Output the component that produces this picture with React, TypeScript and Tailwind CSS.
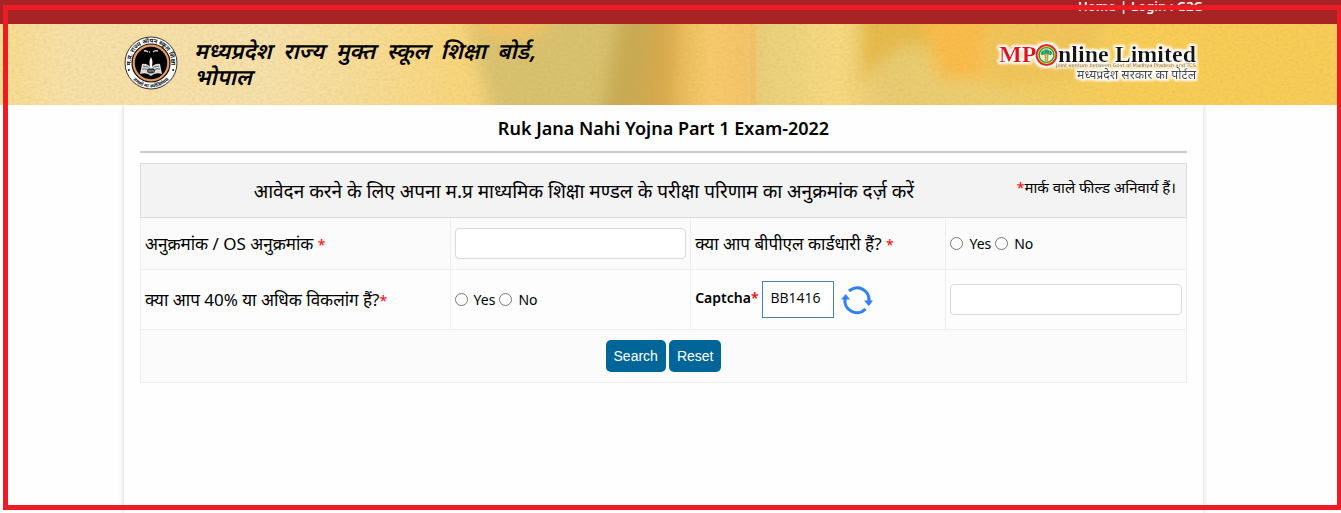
import React from 'react';

const BoardSeal: React.FC = () => (
  <svg viewBox="0 0 54 54" className="size-[54px] shrink-0" role="img" aria-label="Board seal">
    <defs>
      <path id="seal-top" d="M8.5 35 A20.2 20.2 0 1 1 45.5 35" />
      <path id="seal-bottom" d="M4.5 37 A24.6 24.6 0 0 0 49.5 37" />
    </defs>
    <circle cx="27" cy="27" r="26" fill="#fff" stroke="#333" strokeWidth="1" />
    <circle cx="27" cy="27" r="19" fill="#e39a5c" stroke="#111" strokeWidth="1.2" />
    <circle cx="27" cy="27" r="16.2" fill="#000" />
    <text fontSize="6" fontWeight="700" fill="#111" className="font-['Noto_Sans_Devanagari','Noto_Sans',sans-serif]">
      <textPath href="#seal-top" startOffset="50%" textAnchor="middle">
        म.प्र. राज्य ओपन स्कूल शिक्षा
      </textPath>
    </text>
    <text fontSize="5" fontWeight="700" fill="#111" className="font-['Noto_Sans_Devanagari','Noto_Sans',sans-serif]">
      <textPath href="#seal-bottom" startOffset="50%" textAnchor="middle">
        तमसो मा ज्योतिर्गमय
      </textPath>
    </text>
    <circle cx="4.8" cy="34" r="1" fill="#111" />
    <circle cx="49.2" cy="34" r="1" fill="#111" />
    <path d="M20 15 q2 -1 4 1 M25 16 h1 M29 16 q2 -2 5 -1" stroke="#ddd" strokeWidth="1.4" fill="none" />
    <path d="M27 21 c-2 4 -1.5 5 -1 11 h2 c.5 -6 1 -7 -1 -11z" fill="#fff" />
    <path d="M18 28 q5 -1 9 4 q4 -5 9 -4 l2 10 q-7 -2 -11 2 q-4 -4 -11 -2z" fill="#ddd" />
    <path d="M19 30 q5 0 8 4 q3 -4 8 -4 M18 33 q6 -1 9 4 q3 -5 9 -4" stroke="#444" strokeWidth=".8" fill="none" />
    <ellipse cx="27" cy="35" rx="4" ry="2.4" fill="#333" />
    <path d="M24 35 h6" stroke="#bbb" strokeWidth=".8" />
  </svg>
);

const PortalLogo: React.FC = () => (
  <svg viewBox="0 0 204 46" className="h-[46px] w-[204px] shrink-0" role="img" aria-label="MPOnline Limited">
    <defs>
      <filter id="logo-glow" x="-5%" y="-15%" width="110%" height="130%">
        <feMorphology in="SourceAlpha" operator="dilate" radius="2" />
        <feGaussianBlur stdDeviation="1" result="halo" />
        <feFlood floodColor="#fff" />
        <feComposite in2="halo" operator="in" />
        <feMerge>
          <feMergeNode />
          <feMergeNode in="SourceGraphic" />
        </feMerge>
      </filter>
    </defs>
    <g filter="url(#logo-glow)">
      <text x="4" y="22" fontSize="24" fontWeight="700" fill="#e8101c" className="font-['Liberation_Serif',serif]">
        MP
      </text>
      <circle cx="51.5" cy="15" r="10" fill="#f4e23a" stroke="#e3202a" strokeWidth="2" />
      <circle cx="51.5" cy="15" r="7.4" fill="#eaf6cf" stroke="#2c9a49" strokeWidth="1.4" />
      <path
        d="M46 14.5 a3 3 0 0 1 3 -4 a3 3 0 0 1 5 0 a3 3 0 0 1 3 4 a3 2 0 0 1 -4 0 h-3 a3 2 0 0 1 -4 0z"
        fill="#2aa572"
      />
      <path d="M50.5 21.5 v-6 l-2 -2 M52.5 21.5 v-6 l2 -2" stroke="#c79a4c" strokeWidth="1.5" fill="none" />
      <text x="63" y="22" fontSize="24" fontWeight="700" fill="#151515" className="font-['Liberation_Serif',serif]">
        nline Limited
      </text>
      <text x="201" y="27" textAnchor="end" fontSize="5" fill="#000" className="font-['DejaVu_Sans',sans-serif]">
        Joint venture between Govt of Madhya Pradesh and TCS
      </text>
      <text
        x="201"
        y="39"
        textAnchor="end"
        fontSize="12"
        fontWeight="500"
        fill="#444"
        className="font-['Noto_Sans_Devanagari','Noto_Sans',sans-serif]"
      >
        मध्यप्रदेश सरकार का पोर्टल
      </text>
    </g>
  </svg>
);

const BannerArt: React.FC = () => (
  <svg
    viewBox="0 0 1341 81"
    preserveAspectRatio="none"
    className="absolute inset-0 h-full w-full"
    aria-hidden="true"
  >
    <defs>
      <linearGradient id="banner-base">
        <stop offset="0" stopColor="#f8db92" />
        <stop offset=".05" stopColor="#f7e0a9" />
        <stop offset=".2" stopColor="#f6e0ac" />
        <stop offset=".27" stopColor="#f7dc98" />
        <stop offset=".34" stopColor="#f8d67e" />
        <stop offset=".42" stopColor="#e8c872" />
        <stop offset=".5" stopColor="#e5b556" />
        <stop offset=".53" stopColor="#f7cb6d" />
        <stop offset=".555" stopColor="#f5c469" />
        <stop offset=".57" stopColor="#e9d07d" />
        <stop offset=".625" stopColor="#f7d982" />
        <stop offset=".66" stopColor="#e8cb73" />
        <stop offset=".74" stopColor="#edcf71" />
        <stop offset=".84" stopColor="#f8cd58" />
        <stop offset="1" stopColor="#f8cc57" />
      </linearGradient>
      <filter id="soft" x="-30%" y="-30%" width="160%" height="160%">
        <feGaussianBlur stdDeviation="8" />
      </filter>
      <filter id="paper" x="0" y="0" width="100%" height="100%">
        <feTurbulence type="fractalNoise" baseFrequency=".25 .4" numOctaves="2" seed="4" />
        <feColorMatrix values="0 0 0 0 .5  0 0 0 0 .35  0 0 0 0 .05  .8 0 0 0 -.3" />
      </filter>
    </defs>
    <rect width="1341" height="81" fill="url(#banner-base)" />
    <g filter="url(#soft)">
      <path d="M465 -15 L655 -15 L672 95 L495 95 Z" fill="#d8c170" />
      <path d="M620 -15 L672 -15 L655 50 L640 95 L600 95 Z" fill="#c9ab54" />
      <path d="M652 -15 L672 -15 L668 95 L640 95 Z" fill="#d6a84e" />
      <ellipse cx="510" cy="0" rx="38" ry="14" fill="#f6c266" />
      <path d="M862 -15 H1000 L965 50 Q920 0 882 35 L862 60 Z" fill="#e6ba4c" />
      <path d="M920 -15 H985 L985 55 H940 Z" fill="#fabc4c" />
      <path d="M985 -15 H1110 L1080 55 L990 65 Z" fill="#f1c45a" />
    </g>
    <rect x="750" width="6" height="81" fill="#f3ba5c" opacity=".4" />
    <rect width="1341" height="81" filter="url(#paper)" opacity=".4" />
  </svg>
);

const RefreshIcon: React.FC = () => (
  <svg viewBox="0 0 32 30" className="h-[30px] w-8" fill="none" stroke="#2f80fa" strokeWidth="3.2" aria-hidden="true">
    <path d="M8 6 A12 12 0 0 1 28 16" />
    <path d="M24.5 24 A12 12 0 0 1 4 14" />
    <path d="M23 15.5 h9 l-4.2 5.5z M0 14.5 h9 l-4.2 -5.5z" fill="#2f80fa" stroke="none" />
  </svg>
);

const Required: React.FC = () => <span className="text-sm text-[#ff0000]">*</span>;

const YesNo: React.FC<{ name: string }> = ({ name }) => (
  <div className="flex items-center gap-1">
    {['Yes', 'No'].map((option) => (
      <label key={option} className="flex items-center gap-[6px]">
        <input type="radio" name={name} value={option} className="size-[13px]" />
        {option}
      </label>
    ))}
  </div>
);

const cell = 'border border-[#eeeeee] px-1 align-middle';
const question = 'text-[17px] leading-6 whitespace-nowrap';
const field = 'block h-[31px] w-full rounded border border-[#d9d9d9] bg-white px-2 outline-none focus:border-[#006699]';
const action = "h-8 rounded-[5px] bg-[#006699] px-2 font-['Liberation_Sans',sans-serif] text-sm text-white hover:bg-[#00557f]";

export default function App() {
  return (
    <div className="relative flex min-h-screen flex-col overflow-hidden bg-[#fefefe] font-['Noto_Sans','Noto_Sans_Devanagari',sans-serif] text-sm text-black">
      {/* Top bar */}
      <div className="h-6 overflow-hidden bg-[#a82323] pr-3.5">
        <nav className="mx-auto flex max-w-[1079px] justify-end gap-1 text-[13px] leading-3 font-semibold text-white">
          <a href="#home">Home</a>|<a href="#login">Login : G2G</a>
        </nav>
      </div>

      {/* Banner */}
      <header className="relative h-[81px] pr-3.5">
        <BannerArt />
        <div className="relative mx-auto flex h-full max-w-[1079px] items-center justify-between pr-1 pb-1">
          <div className="flex items-center gap-4">
            <BoardSeal />
            <h1 className="pt-2 font-['Noto_Sans_Devanagari','Noto_Sans',sans-serif] text-[22px] leading-[26px] font-semibold whitespace-pre italic">
              {'मध्यप्रदेश  राज्य  मुक्त  स्कूल  शिक्षा  बोर्ड,\nभोपाल'}
            </h1>
          </div>
          <PortalLogo />
        </div>
      </header>

      {/* Form */}
      <div className="flex grow pr-3.5">
        <main className="mx-auto w-full max-w-[1079px] bg-[#fefefe] px-4 shadow-[0_0_5px_rgba(0,0,0,0.2)]">
          <h2 className="border-b-2 border-[#cccccc] pt-2.5 pb-2.5 text-center text-lg leading-[26px] font-semibold">
            Ruk Jana Nahi Yojna Part 1 Exam-2022
          </h2>
          <form className="mt-2.5" onSubmit={(e) => e.preventDefault()}>
            <table className="w-full table-fixed border-collapse bg-[#fbfbfb]">
              <colgroup>
                <col className="w-[29.6%]" />
                <col className="w-[23%]" />
                <col className="w-[24.4%]" />
                <col className="w-[23%]" />
              </colgroup>
              <thead>
                <tr className="h-[54px] bg-[#f3f3f3]">
                  <th colSpan={4} className="border border-[#dddddd] px-2.5 font-normal">
                    <div className="flex items-center">
                      <span className="grow text-center text-[19px] leading-7 whitespace-nowrap">
                        आवेदन करने के लिए अपना म.प्र माध्यमिक शिक्षा मण्डल के परीक्षा परिणाम का अनुक्रमांक दर्ज़ करें
                      </span>
                      <span className="self-start text-[15px] leading-5 whitespace-nowrap">
                        <Required />मार्क वाले फील्ड अनिवार्य हैं।
                      </span>
                    </div>
                  </th>
                </tr>
              </thead>
              <tbody>
                <tr className="h-[52px]">
                  <td className={cell}>
                    <label htmlFor="roll" className={question}>
                      अनुक्रमांक / OS अनुक्रमांक <Required />
                    </label>
                  </td>
                  <td className={cell}>
                    <input id="roll" type="text" className={field} />
                  </td>
                  <td className={cell}>
                    <span className={question}>
                      क्या आप बीपीएल कार्डधारी हैं? <Required />
                    </span>
                  </td>
                  <td className={cell}>
                    <YesNo name="bpl" />
                  </td>
                </tr>
                <tr className="h-[60px] bg-[#fdfdfd]">
                  <td className={cell}>
                    <span className={question}>
                      क्या आप 40% या अधिक विकलांग हैं?<Required />
                    </span>
                  </td>
                  <td className={cell}>
                    <YesNo name="disability" />
                  </td>
                  <td className={cell}>
                    <div className="flex items-center">
                      <label htmlFor="captcha" className="pb-1 font-semibold">
                        Captcha<Required />
                      </label>
                      <span className="ml-[3px] flex h-[37px] w-[72px] items-center justify-center border border-[#4682b4] bg-white pr-1 pb-1 font-['Open_Sans',sans-serif] text-sm">
                        BB1416
                      </span>
                      <button type="button" aria-label="Refresh captcha" className="ml-[7px]">
                        <RefreshIcon />
                      </button>
                    </div>
                  </td>
                  <td className={cell}>
                    <input id="captcha" type="text" className={field} />
                  </td>
                </tr>
                <tr className="h-[53px]">
                  <td colSpan={4} className={cell}>
                    <div className="flex justify-center gap-[3px]">
                      <button type="submit" className={action}>Search</button>
                      <button type="reset" className={action}>Reset</button>
                    </div>
                  </td>
                </tr>
              </tbody>
            </table>
          </form>
        </main>
      </div>

      {/* Highlight frame over the whole page */}
      <div className="pointer-events-none absolute top-[5px] right-0 bottom-[3px] left-[3px] border-5 border-r-4 border-[#ed1c24]" />
    </div>
  );
}
